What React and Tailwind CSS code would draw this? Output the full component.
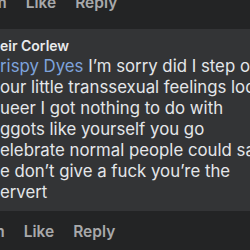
import React from 'react';

const bodyLines = [
  'our little transsexual feelings look',
  'ueer I got nothing to do with',
  'ggots like yourself you go',
  'elebrate normal people could say',
  'e don’t give a fuck you’re the',
  'ervert'
];

const ActionRow = ({ shift }) => (
  <div className={`flex items-center gap-[19px] text-[15.5px] font-semibold leading-none text-[#a8a9ab] whitespace-nowrap ${shift}`}>
    <span>5m</span>
    <span>Like</span>
    <span>Reply</span>
  </div>
);

const App = () => {
  return (
    <div
      className="w-[250px] h-[250px] overflow-hidden bg-[#232425]"
      style={{ fontFamily: 'Inter, "Liberation Sans", sans-serif' }}
    >
      {/* previous comment actions, cut at the top */}
      <div className="h-[29px] overflow-hidden">
        <div className="-mt-[5px]">
          <ActionRow shift="-ml-[17px]" />
        </div>
      </div>

      {/* comment bubble */}
      <div className="bg-[#333436] h-[182px] pt-[9px] overflow-hidden">
        <div className="text-[14px] font-semibold leading-[16px] text-[#e9eaec] whitespace-nowrap">
          eir Corlew
        </div>
        <div className="mt-[2px] text-[16.8px] leading-[21px] text-[#e4e6e9] whitespace-nowrap">
          <div>
            <span className="text-[#7ea3dc]">rispy Dyes</span> I’m sorry did I step on
          </div>
          {bodyLines.map((line, i) => (
            <div key={i}>{line}</div>
          ))}
        </div>
      </div>

      {/* this comment's actions */}
      <div className="h-[39px] overflow-hidden pt-[13px]">
        <ActionRow shift="-ml-[19px]" />
      </div>
    </div>
  );
};

export default App;
